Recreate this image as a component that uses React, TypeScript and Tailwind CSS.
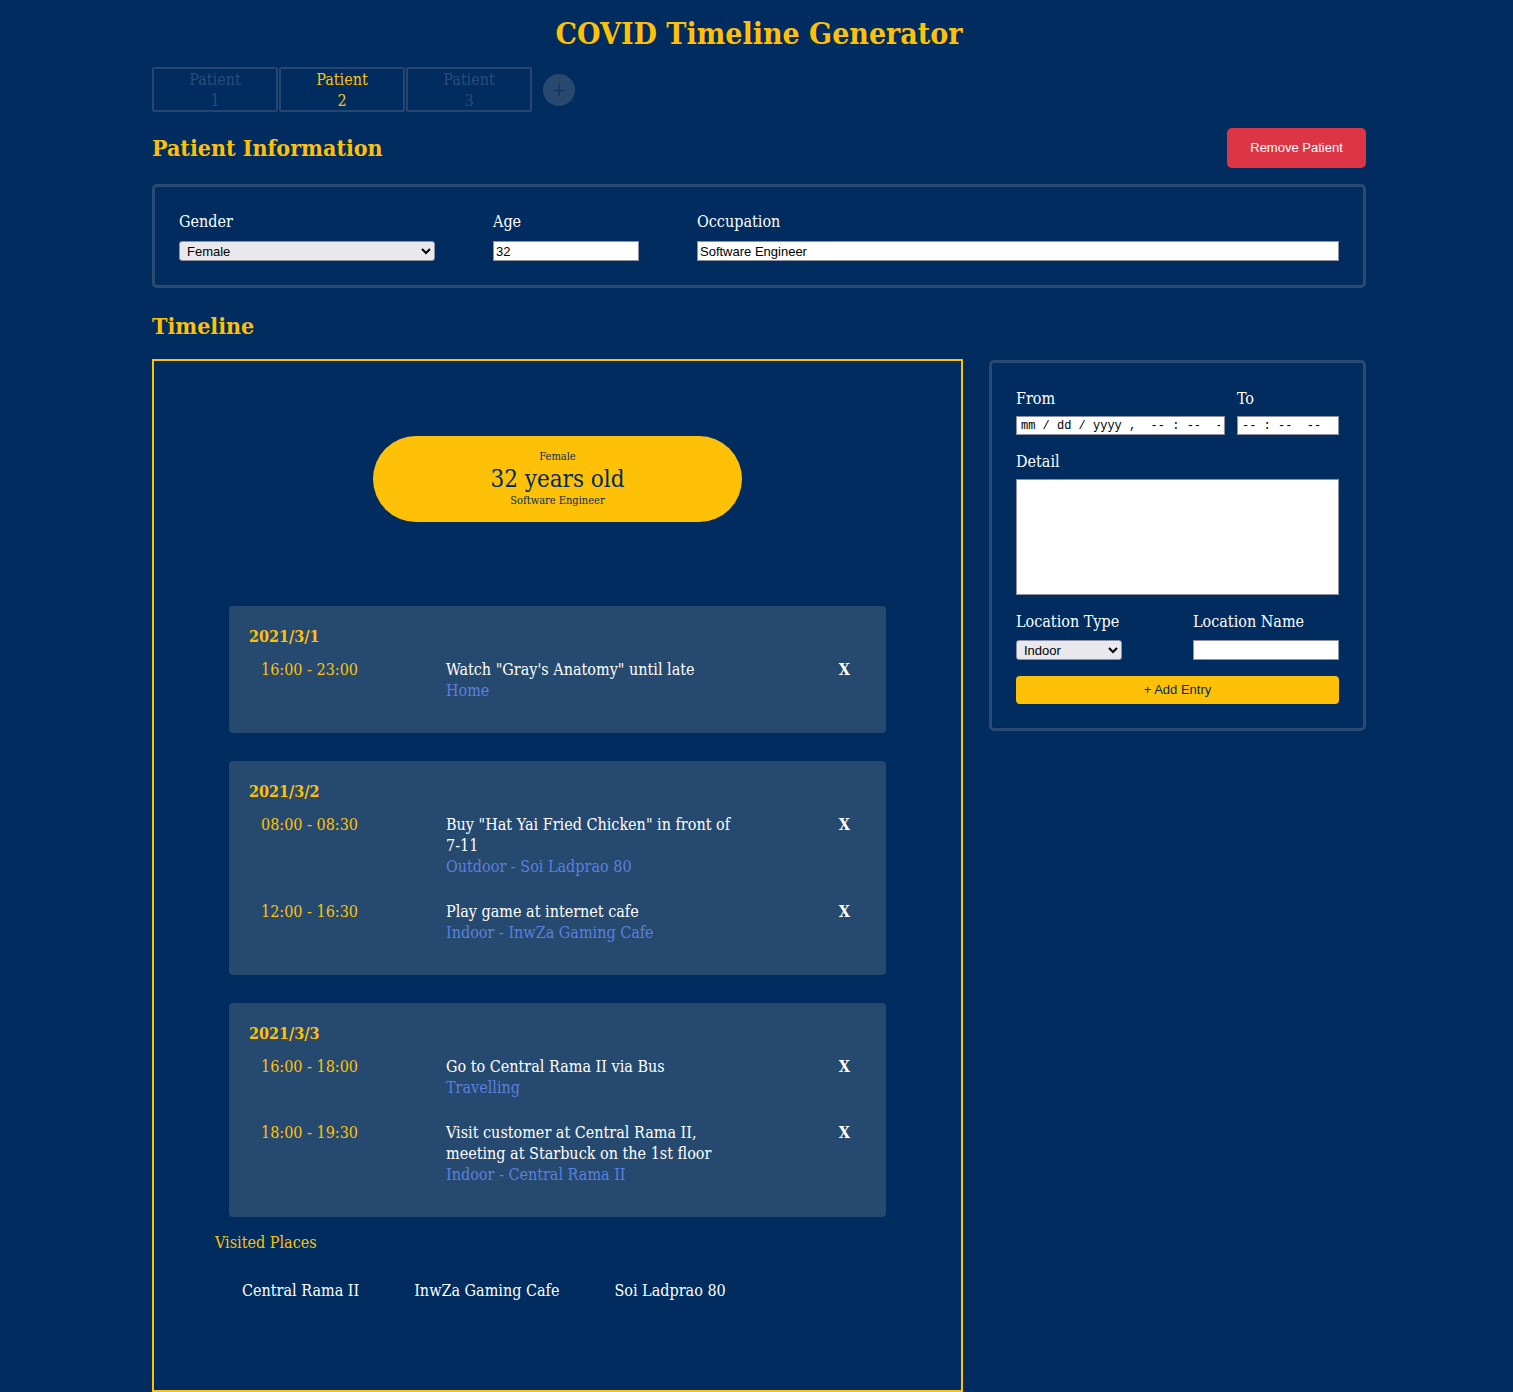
import React from "react";

const slab = { fontFamily: '"DejaVu Serif Condensed", "DejaVu Serif", serif' };
const ui = { fontFamily: '"Liberation Sans", Arial, sans-serif' };
const mono = { fontFamily: '"Liberation Mono", "Courier New", monospace' };

const tabs = [
  { n: 1, active: false },
  { n: 2, active: true },
  { n: 3, active: false },
];

const days = [
  {
    date: "2021/3/1",
    entries: [
      { time: "16:00 - 23:00", detail: 'Watch "Gray\'s Anatomy" until late', place: "Home" },
    ],
  },
  {
    date: "2021/3/2",
    entries: [
      { time: "08:00 - 08:30", detail: 'Buy "Hat Yai Fried Chicken" in front of 7-11', place: "Outdoor - Soi Ladprao 80" },
      { time: "12:00 - 16:30", detail: "Play game at internet cafe", place: "Indoor - InwZa Gaming Cafe" },
    ],
  },
  {
    date: "2021/3/3",
    entries: [
      { time: "16:00 - 18:00", detail: "Go to Central Rama II via Bus", place: "Travelling" },
      {
        time: "18:00 - 19:30",
        detail: "Visit customer at Central Rama II, meeting at Starbuck on the 1st floor",
        place: "Indoor - Central Rama II",
      },
    ],
  },
];

const places = ["Central Rama II", "InwZa Gaming Cafe", "Soi Ladprao 80"];

const Label: React.FC<{ children: React.ReactNode; className?: string }> = ({ children, className }) => (
  <div className={`text-[16px] leading-[24px] text-white ${className ?? ""}`}>{children}</div>
);

const field = "block w-full bg-white border border-[#8f8f9d] text-black";
const dropdown = "block w-full h-[20px] bg-[#e9e9ed] border border-[#8f8f9d] rounded-[3px] text-[13px] text-black px-[3px]";

export default function App() {
  return (
    <div className="min-h-[1392px] bg-[#002c5f]" style={slab}>
      <div className="w-[1214px] ml-[152px] pt-[14px]">
        <h1 className="text-center text-[30px] leading-[40px] font-bold text-[#ffc107]">
          COVID Timeline Generator
        </h1>

        {/* tabs */}
        <div className="mt-[13px] flex items-center">
          {tabs.map((t) => (
            <div
              key={t.n}
              className={`w-[126px] h-[45px] border-2 border-[#264670] rounded-[2px] mr-px flex flex-col items-center justify-center text-[16px] leading-[21px] ${
                t.active ? "text-[#ffc107]" : "text-[#2b4c78]"
              }`}
            >
              <span>Patient</span>
              <span>{t.n}</span>
            </div>
          ))}
          <div className="ml-[10px] w-[32px] h-[32px] rounded-full bg-[#28486f] flex items-center justify-center text-[#0f3466] text-[18px] leading-none">
            +
          </div>
        </div>

        {/* patient info */}
        <div className="mt-[16px] flex items-center justify-between h-[40px]">
          <h2 className="text-[23px] leading-[32px] font-bold text-[#ffc107]">Patient Information</h2>
          <button className="w-[139px] h-[40px] rounded-[5px] bg-[#dc3545] text-white text-[13px]" style={ui}>
            Remove Patient
          </button>
        </div>

        <div className="mt-[16px] border-[3px] border-[#2a4a70] rounded-[5px] px-6 pt-[23px] pb-[24px] grid grid-cols-[256px_146px_1fr] gap-x-[58px]">
          <div>
            <Label className="mb-[7px]">Gender</Label>
            <select defaultValue="Female" className={dropdown} style={ui}>
              <option>Male</option>
              <option>Female</option>
            </select>
          </div>
          <div>
            <Label className="mb-[7px]">Age</Label>
            <input defaultValue="32" className={`${field} h-[20px] text-[13px] px-[2px]`} style={ui} />
          </div>
          <div>
            <Label className="mb-[7px]">Occupation</Label>
            <input defaultValue="Software Engineer" className={`${field} h-[20px] text-[13px] px-[2px]`} style={ui} />
          </div>
        </div>

        <h2 className="mt-[22px] text-[23px] leading-[32px] font-bold text-[#ffc107]">Timeline</h2>

        <div className="mt-[17px] grid grid-cols-[811px_377px] gap-x-[26px] items-start">
          {/* timeline board */}
          <div className="border-2 border-[#ffc107] h-[1033px] pt-[75px]">
            <div className="mx-auto w-[369px] h-[86px] rounded-full bg-[#ffc107] flex flex-col items-center justify-center text-[#002c5f]">
              <div className="text-[11px] leading-[14px]">Female</div>
              <div className="text-[24px] leading-[30px]">32 years old</div>
              <div className="text-[11px] leading-[14px]">Software Engineer</div>
            </div>

            <div className="mt-[84px] flex flex-col gap-[28px] px-[75px]">
              {days.map((d) => (
                <div key={d.date} className="bg-[#26496f] rounded-[4px] pt-[20px] pb-[32px] pl-[20px] pr-[36px]">
                  <div className="text-[16px] leading-[21px] font-bold text-[#ffc107]">{d.date}</div>
                  <div className="mt-[12px] flex flex-col gap-[24px]">
                    {d.entries.map((e) => (
                      <div key={e.time} className="flex items-start text-[16px] leading-[21px]">
                        <div className="w-[197px] pl-[12px] text-[#ffc107]">{e.time}</div>
                        <div className="w-[300px]">
                          <div className="text-white">{e.detail}</div>
                          <div className="text-[#5b80dd]">{e.place}</div>
                        </div>
                        <div className="ml-auto text-white font-bold">X</div>
                      </div>
                    ))}
                  </div>
                </div>
              ))}
            </div>

            <div className="mt-[15px] pl-[61px] text-[16px] leading-[21px] text-[#ffc107]">Visited Places</div>
            <div className="mt-[27px] pl-[88px] flex gap-[55px] text-[16px] leading-[21px] text-white">
              {places.map((p) => (
                <span key={p}>{p}</span>
              ))}
            </div>
          </div>

          {/* entry form */}
          <div className="border-[3px] border-[#2a4a70] rounded-[5px] px-6 pt-[24px] pb-6 mt-px">
            <div className="flex gap-[12px]">
              <div className="w-[209px]">
                <Label className="mb-[5px]">From</Label>
                <input
                  type="text"
                  placeholder="mm / dd / yyyy ,  -- : --  --"
                  className={`${field} h-[19px] text-[12px] px-[4px] placeholder:text-black`}
                  style={mono}
                />
              </div>
              <div className="flex-1">
                <Label className="mb-[5px]">To</Label>
                <input
                  type="text"
                  placeholder="-- : --  --"
                  className={`${field} h-[19px] text-[12px] px-[4px] placeholder:text-black`}
                  style={mono}
                />
              </div>
            </div>

            <Label className="mt-[15px] mb-[5px]">Detail</Label>
            <textarea className={`${field} h-[116px] resize-none`} />

            <div className="mt-[15px] flex gap-[71px]">
              <div className="w-[106px]">
                <Label className="mb-[6px] whitespace-nowrap">Location Type</Label>
                <select defaultValue="Indoor" className={dropdown} style={ui}>
                  <option>Indoor</option>
                  <option>Outdoor</option>
                  <option>Home</option>
                  <option>Travelling</option>
                </select>
              </div>
              <div className="flex-1">
                <Label className="mb-[6px]">Location Name</Label>
                <input className={`${field} h-[20px] text-[13px]`} style={ui} />
              </div>
            </div>

            <button
              className="mt-[16px] w-full h-[28px] rounded-[4px] bg-[#ffc107] text-[#002c5f] text-[13px]"
              style={ui}
            >
              + Add Entry
            </button>
          </div>
        </div>
      </div>
    </div>
  );
}
